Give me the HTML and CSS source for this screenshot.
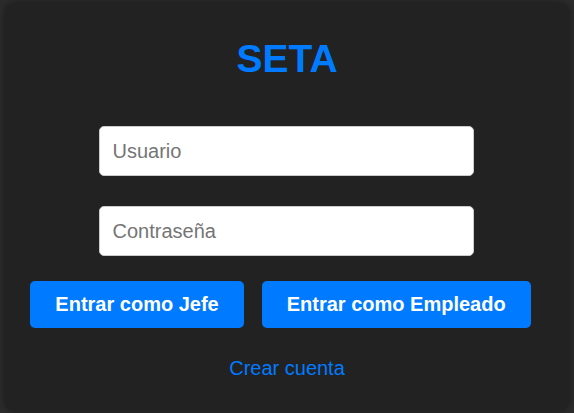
FILE: index.html
```html
<!DOCTYPE html>
<html lang="es">
<head>
<meta charset="utf-8">
<title>SETA</title>
<link rel="stylesheet" href="styles.css">
</head>
<body>
<div class="card">
  <h1 class="title">SETA</h1>
  <div class="fields">
    <input class="field" type="text" placeholder="Usuario">
    <input class="field" type="password" placeholder="Contraseña">
  </div>
  <div class="actions">
    <button class="btn">Entrar como Jefe</button>
    <button class="btn">Entrar como Empleado</button>
  </div>
  <a class="link" href="#">Crear cuenta</a>
</div>
</body>
</html>
```

FILE: styles.css
```css
html, body {
  margin: 0;
  padding: 0;
}
body {
  background: #2c2c2c;
  font-family: "Liberation Sans", Arial, sans-serif;
  width: 574px;
  height: 413px;
  overflow: hidden;
  padding: 3px 5px 2px 5px;
  box-sizing: border-box;
}
.card {
  background: #222222;
  border-radius: 10px;
  box-shadow: 0 0 8px rgba(0, 0, 0, 0.45);
  height: 408px;
  box-sizing: border-box;
  display: flex;
  flex-direction: column;
  align-items: center;
  padding-top: 32px;
}
.title {
  margin: 0;
  color: #007bff;
  font-size: 39px;
  font-weight: bold;
  line-height: 48px;
}
.fields {
  display: flex;
  flex-direction: column;
  gap: 30px;
  margin-top: 43px;
  margin-left: -2px;
}
.field {
  width: 375px;
  height: 50px;
  box-sizing: border-box;
  border: 1px solid #cccccc;
  border-radius: 5px;
  padding: 0 13px;
  font-family: "Liberation Sans", Arial, sans-serif;
  font-size: 20px;
  color: #333;
  background: #fff;
  outline: none;
}
.field::placeholder {
  color: #757575;
}
.actions {
  display: flex;
  gap: 18px;
  margin-top: 25px;
  padding-right: 13px;
}
.btn {
  background: #007bff;
  color: #fff;
  border: none;
  border-radius: 5px;
  height: 47px;
  padding: 0 25px;
  font-family: "Liberation Sans", Arial, sans-serif;
  font-size: 20px;
  font-weight: bold;
  cursor: pointer;
}
.link {
  margin-top: 28px;
  color: #007bff;
  font-size: 20px;
  text-decoration: none;
  line-height: 24px;
}
```
